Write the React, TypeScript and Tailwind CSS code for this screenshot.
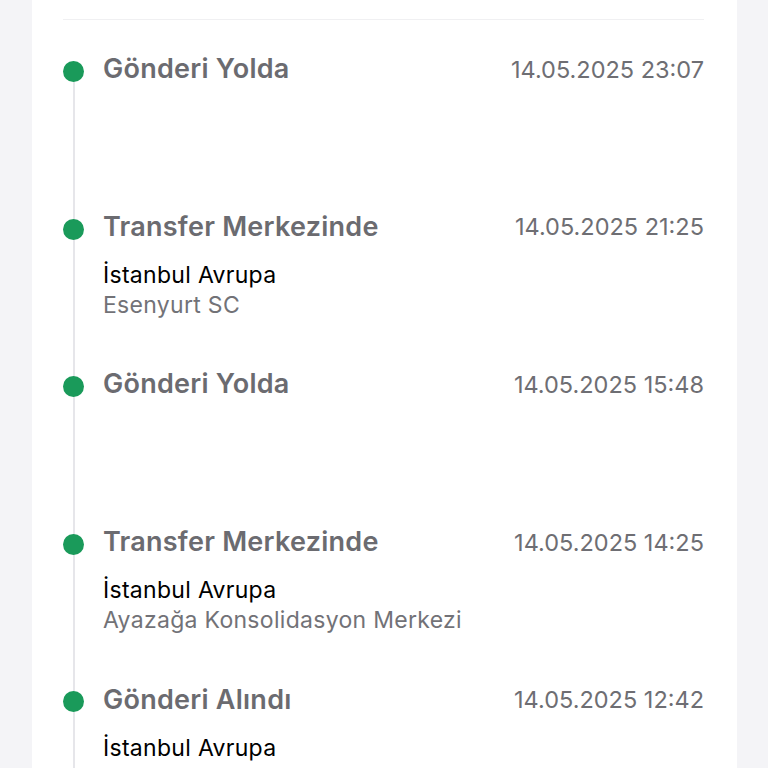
import React from "react";

type Step = {
  title: string;
  date: string;
  city?: string;
  place?: string;
};

const steps: Step[] = [
  { title: "Gönderi Yolda", date: "14.05.2025 23:07" },
  { title: "Transfer Merkezinde", date: "14.05.2025 21:25", city: "İstanbul Avrupa", place: "Esenyurt SC" },
  { title: "Gönderi Yolda", date: "14.05.2025 15:48" },
  { title: "Transfer Merkezinde", date: "14.05.2025 14:25", city: "İstanbul Avrupa", place: "Ayazağa Konsolidasyon Merkezi" },
  { title: "Gönderi Alındı", date: "14.05.2025 12:42", city: "İstanbul Avrupa" },
];

export default function App() {
  return (
    <div
      className="min-h-screen h-[768px] overflow-hidden bg-[#f4f4f7] flex"
      style={{ fontFamily: "Inter, 'Noto Sans', sans-serif" }}
    >
      <div className="ml-[32px] w-[705px] bg-white pl-[31px] pr-[33px]">
        {/* divider */}
        <div className="h-[20px] border-b border-[#f0f0f2]" />

        {/* timeline */}
        <div className="relative">
          <div className="absolute left-[10px] top-[50px] bottom-0 w-[2px] bg-[#e6e6ea]" />
          {steps.map((s, i) => (
            <div key={i} className="relative h-[157.6px] pt-[32.5px]">
              <div className="flex items-start">
                <div className="w-[21px] h-[34px] flex items-center shrink-0">
                  <span className="block w-[21px] h-[21px] mt-[4px] rounded-full bg-[#1a9a5a]" />
                </div>
                <div className="ml-[19px] flex-1 min-w-0">
                  <div className="flex items-center justify-between h-[34px]">
                    <span className="text-[27px] font-semibold text-[#6b6b70] tracking-[0.25px]">{s.title}</span>
                    <span className="text-[23.5px] text-[#6e6e73] tracking-[0px]">{s.date}</span>
                  </div>
                  {s.city && (
                    <div className="mt-[16px]">
                      <div className="text-[23px] leading-[30px] text-black tracking-[0.3px]">{s.city}</div>
                      {s.place && (
                        <div className="text-[23px] leading-[30px] text-[#727277] tracking-[0.3px]">{s.place}</div>
                      )}
                    </div>
                  )}
                </div>
              </div>
            </div>
          ))}
        </div>
      </div>
    </div>
  );
}
